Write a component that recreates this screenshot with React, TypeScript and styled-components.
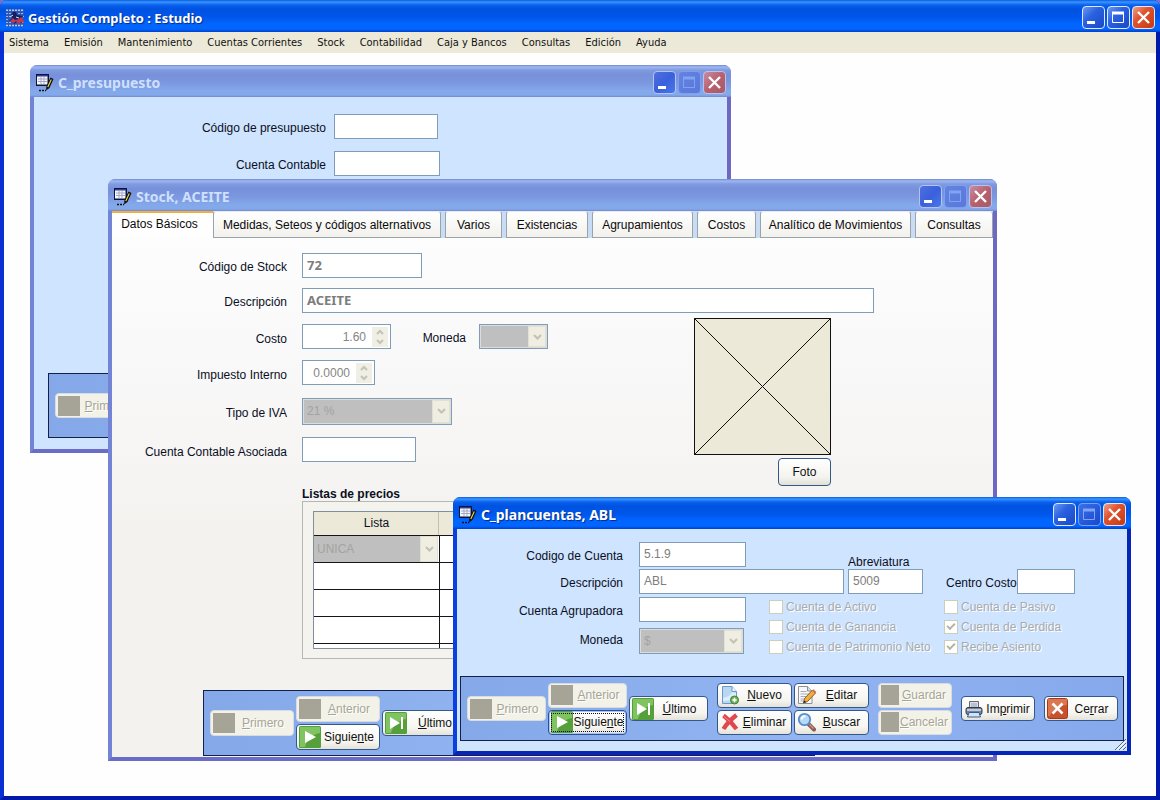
import React, { useId } from "react";
import styled, { createGlobalStyle, css } from "styled-components";

const ui = `"Liberation Sans", Arial, sans-serif`;
const menuFont = `"DejaVu Sans Condensed", Tahoma, sans-serif`;
const titleFont = `"Noto Sans", "Trebuchet MS", sans-serif`;

const GlobalStyle = createGlobalStyle`
  *, *::before, *::after { box-sizing: border-box; }
  body { margin: 0; background: #7b6fd0; font: 12px/16px ${ui}; color: #0a0f1e; }
  button, input, select { font: inherit; margin: 0; }
`;

/* ---------- window chrome ---------- */

type Tone = "active" | "inactive";

const App_ = styled.main`
  display: flex;
  flex-direction: column;
  min-height: 100vh;
  border: 4px solid #0a2fd2;
  border-top: 0;
  border-right-color: #0019a8;
  border-bottom-color: #0019a8;
  border-radius: 7px 7px 0 0;
  background: #fefefe;
`;

const Frame = styled.section<{ $tone: Tone; $x: number; $y: number; $w: number; $h: number }>`
  position: absolute;
  left: ${(p) => p.$x}px;
  top: ${(p) => p.$y}px;
  width: ${(p) => p.$w}px;
  min-height: ${(p) => p.$h}px;
  display: flex;
  flex-direction: column;
  border: 4px solid;
  border-top: 0;
  border-radius: 8px 8px 0 0;
  ${(p) =>
    p.$tone === "active"
      ? css`
          border-color: #0a3fe0 #0526b8 #0526b8 #0a3fe0;
        `
      : css`
          border-color: #7383d6 #6c68c4 #6a6cc6 #7383d6;
        `}
`;

const Bar = styled.header<{ $tone: Tone }>`
  display: flex;
  align-items: center;
  gap: 4px;
  height: 32px;
  margin: 0 -4px;
  padding: 3px 5px 0 6px;
  border-radius: 7px 7px 0 0;
  background: ${(p) =>
    p.$tone === "active"
      ? "linear-gradient(#0a5be0 0, #3a95ff 2px, #0a62ee 5px, #0052e0 9px, #0056ea 17px, #0066ff 24px, #0066ff 29px, #0040cc 32px)"
      : "linear-gradient(#7488cf 0, #9db8f2 2px, #819be0 5px, #7790da 10px, #7b98e0 18px, #84a9ea 26px, #84a9ea 30px, #7487d2 32px)"};
`;

const Title = styled.h1<{ $tone: Tone }>`
  flex: 1;
  margin: 0;
  font: 700 13px/20px ${titleFont};
  color: ${(p) => (p.$tone === "active" ? "#fff" : "#cfe0ff")};
  text-shadow: ${(p) => (p.$tone === "active" ? "1px 1px 1px #0a2a8c" : "none")};
`;

const ChildTitle = styled(Title)`
  font-size: 14px;
`;

const Controls = styled.div`
  display: flex;
  gap: 2px;
`;

const Control = styled.button<{ $tone: Tone; $kind: "min" | "max" | "close"; $off?: boolean }>`
  width: 23px;
  height: 23px;
  padding: 0;
  display: grid;
  place-items: center;
  border-radius: 4px;
  border: 1px solid ${(p) => (p.$tone === "active" && !p.$off ? "#dfeaff" : p.$off ? "#7d9ff0" : "#b3c4f3")};
  background: ${(p) => {
    if (p.$kind === "close")
      return p.$tone === "active"
        ? "linear-gradient(135deg, #f0a088, #e0522c 40%, #c43a14)"
        : "linear-gradient(135deg, #c88ca4, #b8606c 50%, #a85a68)";
    if (p.$off) return p.$tone === "active" ? "linear-gradient(135deg, #3a70ea, #1648cc)" : "linear-gradient(135deg, #6482e0, #5a78da)";
    return p.$tone === "active"
      ? "linear-gradient(135deg, #6c98f4, #2a62e0 40%, #1a48c4)"
      : "linear-gradient(135deg, #5070e0, #3a60dc 50%, #4878ea)";
  }};
  color: ${(p) => (p.$off ? "#7fa4f4" : "#fff")};
`;

function WindowControls({ tone, maxOff }: { tone: Tone; maxOff?: boolean }) {
  return (
    <Controls>
      <Control type="button" aria-label="Minimizar" $tone={tone} $kind="min">
        <svg width="21" height="21"><rect x="4" y="14" width="8" height="3" fill="currentColor" /></svg>
      </Control>
      <Control type="button" aria-label="Maximizar" $tone={tone} $kind="max" $off={maxOff}>
        <svg width="21" height="21">
          <path d="M4.500 5.500h11v10h-11z" fill="none" stroke="currentColor" />
          <path d="M4 4.500h12v3H4z" fill="currentColor" />
        </svg>
      </Control>
      <Control type="button" aria-label="Cerrar ventana" $tone={tone} $kind="close">
        <svg width="21" height="21"><path d="M5 5l11 11M16 5L5 16" stroke="currentColor" strokeWidth="2.400" /></svg>
      </Control>
    </Controls>
  );
}

const FormIcon = () => (
  <svg width="18" height="18" viewBox="0 0 18 18" aria-hidden="true">
    <rect x="0" y="0" width="13" height="12" fill="#0c1440" />
    <rect x="1" y="1" width="11" height="2" fill="#2c3a94" />
    <rect x="1" y="2.500" width="10.500" height="8" fill="#f6f8ff" />
    <path d="M2 5h9M2 7.500h9M5 3v7M8 3v7" stroke="#a4a8c0" fill="none" />
    <path d="M14.500 3.500l3 1.500-4 9-3.500 2.500.5-4.500z" fill="#111" />
    <path d="M14.800 5.200l1 .6-3.500 7.500-1-.5z" fill="#f0dc48" />
    <path d="M3 16.500h7" stroke="#111" strokeWidth="1.500" strokeDasharray="2 1" />
  </svg>
);

const AppIcon = () => (
  <svg width="18" height="18" viewBox="0 0 18 18" aria-hidden="true">
    <rect width="18" height="18" fill="#2c58b8" />
    <path d="M0 1.200h18M0 16.500h18" stroke="#b8c8f0" strokeWidth="1.600" strokeDasharray="2 1" />
    <path d="M0 4.500h6M0 7.500h4M0 10.500h3M0 13.500h6M12 4.500h6M14 7.500h4M13 13.500h5" stroke="#9cb0e4" strokeDasharray="2 1" />
    <path d="M7 3h3l1 3 6 1-3 3 2 4-5-1-3 2-1-3-4 0 3-3-1-3z" fill="#141e60" />
    <path d="M4 12l3-3 2 2 4-1 2-2 3 4v2l-3-1-3 2-2-3-2 2z" fill="#c43850" />
    <path d="M4 8l3-2M10 8l3 1" stroke="#e8ecfa" />
  </svg>
);

/* ---------- menu ---------- */

const Menu = styled.nav`
  display: flex;
  flex-wrap: wrap;
  gap: 15px;
  min-height: 21px;
  padding: 0 5px;
  background: #ece9d8;
`;

const MenuItem = styled.button`
  border: 0;
  padding: 0;
  background: none;
  color: #111;
  font: 11px/20px ${menuFont};
`;

const Desk = styled.div`
  flex: 1;
`;

/* ---------- form parts ---------- */

const line = "#7f9db9";

const Field = styled.input<{ $w?: number; $bold?: boolean }>`
  width: ${(p) => (p.$w ? `${p.$w}px` : "100%")};
  height: 25px;
  padding: 0 4px 2px;
  border: 1px solid ${line};
  background: #fff;
  color: #7d7d7d;
  ${(p) => p.$bold && `font: 700 13px/20px ${titleFont};`}
`;

const Label = styled.label<{ $pad?: number }>`
  text-align: right;
  padding: 6px ${(p) => p.$pad ?? 0}px 0 0;
  white-space: nowrap;
`;

const SpinBox = styled.span<{ $w: number }>`
  display: flex;
  width: ${(p) => p.$w}px;
  height: 25px;
  padding-right: 2px;
  align-items: center;
  border: 1px solid ${line};
  background: #fff;
`;

const SpinInput = styled.input`
  flex: 1;
  min-width: 0;
  border: 0;
  padding: 0 6px 0 0;
  background: none;
  text-align: right;
  color: #858585;
`;

const SpinArrows = styled.span`
  display: grid;
  width: 16px;
  height: 20px;
  place-items: center;
  background: #f0efe6;
`;

const ComboBox = styled.span<{ $w: number; $h: number; $flat?: boolean }>`
  display: flex;
  width: ${(p) => p.$w}px;
  height: ${(p) => p.$h}px;
  padding: ${(p) => (p.$flat ? 0 : 1)}px;
  border: ${(p) => (p.$flat ? 0 : 1)}px solid ${line};
  background: #dcdcd8;
`;

const ComboSelect = styled.select`
  flex: 1;
  min-width: 0;
  appearance: none;
  border: 0;
  border-radius: 0;
  padding: 0 3px;
  background: #bfbfbf;
  color: #a3a3a0;
  opacity: 1;
`;

const ComboArrow = styled.span`
  display: grid;
  width: 18px;
  place-items: center;
  background: #f0eee2;
  border: 1px solid #e2e0d2;
`;

function Combo({ w, h, value, id, flat, label }: { w: number; h: number; value: string; id?: string; flat?: boolean; label?: string }) {
  return (
    <ComboBox $w={w} $h={h} $flat={flat}>
      <ComboSelect id={id} disabled aria-label={label}>
        <option>{value}</option>
      </ComboSelect>
      <ComboArrow>
        <svg width="9" height="6"><path d="M1 1l3.500 3.500L8 1" fill="none" stroke="#c2c1b2" strokeWidth="2" /></svg>
      </ComboArrow>
    </ComboBox>
  );
}

function Spin({ w, value, id }: { w: number; value: string; id: string }) {
  return (
    <SpinBox $w={w}>
      <SpinInput id={id} defaultValue={value} />
      <SpinArrows>
        <svg width="8" height="16" fill="none" stroke="#c4c3b4" strokeWidth="2">
          <path d="M1 5l3-3 3 3M1 11l3 3 3-3" />
        </svg>
      </SpinArrows>
    </SpinBox>
  );
}

/* ---------- record toolbar ---------- */

const Toolbar = styled.footer`
  display: flex;
  align-items: center;
  gap: 9px;
  padding-left: 6px;
  border: 1px solid #14204a;
  background: linear-gradient(90deg, #84a8e8, #92b4f2 50%, #86a9ec);
`;

const Group = styled.div`
  display: flex;
  align-items: center;
  gap: 2px;
`;

const Stack = styled.div`
  display: grid;
  gap: 2px;
`;

const ToolButton = styled.button<{ $w: number; $h: number; $focus?: boolean }>`
  display: flex;
  align-items: center;
  width: ${(p) => p.$w}px;
  height: ${(p) => p.$h}px;
  padding: 0 2px;
  border: 1px solid #33588a;
  border-radius: 4px;
  background: linear-gradient(#ffffff, #f6f5f0 70%, #e4e2d8);
  color: #111;
  white-space: nowrap;
  &:disabled {
    border-color: #d8dce0;
    background: #f3f2e8;
    color: #a6a595;
    text-shadow: 1px 1px 0 #fff;
  }
  ${(p) =>
    p.$focus &&
    css`
      border-color: #2c4f9c;
      box-shadow: inset 0 0 0 1px #a9c4f4;
      outline: 1px dotted #111;
      outline-offset: -4px;
    `}
`;

const Caption = styled.span`
  flex: 1;
  text-align: center;
`;

const Blank = styled.i<{ $w: number }>`
  width: ${(p) => p.$w}px;
  height: 20px;
  background: #a5a497;
`;

const Green = ({ last }: { last?: boolean }) => (
  <svg width="22" height="22" viewBox="0 0 22 22" aria-hidden="true">
    <rect width="22" height="22" rx="1.500" fill="#56a03c" />
    <path d="M1 1h20v6C14 8 8 13 6 21H1z" fill="#80c462" />
    <path d={last ? "M5 5l10 6-10 6z" : "M6 5l11 6-11 6z"} fill="#fff" />
    {last && <path d="M17 5v12" stroke="#fff" strokeWidth="2" />}
  </svg>
);

const NewIcon = () => (
  <svg width="20" height="20" viewBox="0 0 20 20" aria-hidden="true">
    <path d="M2.500 1.500h9.500l4.500 5v12h-14z" fill="#b8d8f2" stroke="#6c9ac8" />
    <path d="M12 1.500v5h4.500" fill="#eef6fd" stroke="#6c9ac8" />
    <path d="M3 13c5-1 8-3 9-6l4 1v4c-3 3-8 4-13 4z" fill="#dcedfa" />
    <circle cx="14.500" cy="15" r="4" fill="#6cb058" stroke="#3e8434" />
    <path d="M14.500 12.800v4.400M12.300 15h4.400" stroke="#fff" strokeWidth="1.500" />
  </svg>
);
const DeleteIcon = () => (
  <svg width="20" height="20" viewBox="0 0 20 20" aria-hidden="true">
    <path d="M3.500 3.500c4 3 9 8 13 13.500M16.500 3C11.500 7 7 11 3.500 17" stroke="#e0484e" strokeWidth="4.400" fill="none" />
    <path d="M4 4.500l6 5" stroke="#f08a8e" />
  </svg>
);
const EditIcon = () => (
  <svg width="20" height="20" viewBox="0 0 20 20" aria-hidden="true">
    <path d="M1.500 1.500h9l4.500 4.500v12.500H1.500z" fill="#f8f8fa" stroke="#8a8f98" />
    <path d="M10.500 1.500V6H15" fill="#cfe0f0" stroke="#8a8f98" />
    <path d="M3.500 6.500h6M3.500 9h9M3.500 11.500h7M3.500 14h4M3.500 16h3" stroke="#a4acb8" />
    <path d="M15.500 5l3 3-8 8.500-4 1.500 1-4.500z" fill="#f0ae40" stroke="#8a5a20" />
    <path d="M15 5.500L18 8.500l1.300-1.500-2.800-2.800z" fill="#d86a50" />
    <path d="M6.500 18l.7-2.600 1.900 1.700z" fill="#222" />
  </svg>
);
const SearchIcon = () => (
  <svg width="20" height="20" viewBox="0 0 20 20" aria-hidden="true">
    <path d="M11.500 12l5.500 5.500" stroke="#8c5c50" strokeWidth="4" strokeLinecap="round" />
    <path d="M12.500 12.500l4 4" stroke="#c89a88" strokeWidth="1.200" />
    <circle cx="7.500" cy="7.500" r="5.700" fill="#b4daf8" stroke="#5a8cd0" strokeWidth="1.800" />
    <path d="M4.500 7.500c.3-2.200 1.800-3.500 4-3.200" stroke="#fff" strokeWidth="1.800" fill="none" />
  </svg>
);
const PrintIcon = () => (
  <svg width="20" height="20" viewBox="0 0 20 20" aria-hidden="true">
    <path d="M5.500 9V2.500h9V9" fill="#dce0e8" stroke="#626a78" />
    <path d="M7 5h6M7 7h6" stroke="#9aa2b0" />
    <rect x="2" y="8.500" width="16" height="7" rx="2" fill="#76849a" stroke="#303a4c" />
    <path d="M3 11h14" stroke="#dbe3ee" strokeWidth="1.500" />
    <path d="M5 13.500h10l1.500 4.500h-13z" fill="#cfe4fa" stroke="#3c5c8c" />
  </svg>
);
const CloseIcon = () => (
  <svg width="21" height="21" viewBox="0 0 21 21" aria-hidden="true">
    <rect x="0.500" y="0.500" width="20" height="20" rx="2" fill="#c8502c" stroke="#a03c1c" />
    <path d="M1 1h19v6C12 8 5 11 3 18H1z" fill="#dc7650" />
    <path d="M5.500 5.500l10 10M15.500 5.500l-10 10" stroke="#fff" strokeWidth="2.600" />
  </svg>
);

function NavButtons({ w, h, focus }: { w: number; h: number; focus?: boolean }) {
  return (
    <Group>
      <ToolButton type="button" disabled $w={w} $h={h}><Blank $w={22} /><Caption><u>P</u>rimero</Caption></ToolButton>
      <Stack>
        <ToolButton type="button" disabled $w={w} $h={h}><Blank $w={22} /><Caption><u>A</u>nterior</Caption></ToolButton>
        <ToolButton type="button" $w={w} $h={h} $focus={focus}><Green /><Caption>Siguie<u>n</u>te</Caption></ToolButton>
      </Stack>
      <ToolButton type="button" $w={w} $h={h}><Green last /><Caption><u>Ú</u>ltimo</Caption></ToolButton>
    </Group>
  );
}

/* ---------- C_presupuesto ---------- */

const BlueBody = styled.form`
  flex: 1;
  display: flex;
  flex-direction: column;
  justify-content: space-between;
  background: #cfe4ff;
`;

const BudgetGrid = styled.div`
  display: grid;
  grid-template-columns: 292px auto;
  gap: 12px 8px;
  padding-top: 17px;
`;

const BudgetTools = styled(Toolbar)`
  height: 65px;
  margin: 0 14px 11px;
`;

function BudgetWindow() {
  const id = useId();
  return (
    <Frame $tone="inactive" $x={30} $y={65} $w={701} $h={388}>
      <Bar $tone="inactive">
        <FormIcon />
        <ChildTitle as="h2" $tone="inactive">C_presupuesto</ChildTitle>
        <WindowControls tone="inactive" maxOff />
      </Bar>
      <BlueBody>
        <BudgetGrid>
          <Label htmlFor={id + "c"}>Código de presupuesto</Label>
          <Field id={id + "c"} $w={104} />
          <Label htmlFor={id + "n"}>Cuenta Contable</Label>
          <Field id={id + "n"} $w={106} />
        </BudgetGrid>
        <BudgetTools>
          <ToolButton type="button" disabled $w={79} $h={25}><Blank $w={22} /><Caption><u>P</u>rimero</Caption></ToolButton>
        </BudgetTools>
      </BlueBody>
    </Frame>
  );
}

/* ---------- Stock ---------- */

const StockBody = styled.form`
  flex: 1;
  display: flex;
  flex-direction: column;
  background: linear-gradient(#fefefe, #f9f8f8 30%, #f3f2ef 60%, #f3f2ee);
`;

const Tabs = styled.div`
  display: flex;
  gap: 4px;
  height: 27px;
  background: #c9dcf6;
`;

const Tab = styled.button<{ $w: number; $on?: boolean }>`
  flex: 0 1 ${(p) => p.$w}px;
  padding: 0;
  white-space: nowrap;
  color: #0a0a0a;
  ${(p) =>
    p.$on
      ? css`
          margin-right: -4px;
          padding: 0 6px 4px 0;
          border: 0;
          border-top: 2px solid #f0b040;
          background: #fefefe;
        `
      : css`
          border: 1px solid #9aa2aa;
          border-top-color: #e8ecf0;
          border-radius: 3px 3px 0 0;
          background: linear-gradient(#fff, #f2f1ec);
        `}
`;

const StockTop = styled.div`
  display: grid;
  grid-template-columns: 175px auto;
  gap: 10px 15px;
  padding: 15px 119px 0 0;
`;

const StockMid = styled.div`
  display: flex;
  justify-content: space-between;
  padding: 5px 162px 0 0;
`;

const StockGrid = styled.div`
  display: grid;
  grid-template-columns: 175px auto;
  grid-template-rows: 25px 25px 30px 25px;
  align-items: center;
  gap: 11px 15px;
  padding-top: 6px;
`;

const MidLabel = styled(Label)`
  padding-top: 4px;
`;

const Inline = styled.div`
  display: flex;
`;

const Gapped = styled(Label)`
  width: 75px;
`;

const ComboSlot = styled.span`
  margin-left: 13px;
`;

const PhotoBox = styled.div`
  display: flex;
  flex-direction: column;
  align-items: flex-end;
  gap: 3px;
`;

const PushButton = styled.button`
  width: 53px;
  height: 28px;
  padding: 0;
  border: 1px solid #33588a;
  border-radius: 4px;
  background: linear-gradient(#fff, #f4f3ee 70%, #e2e0d6);
  color: #111;
`;

const PriceSet = styled.div`
  margin: 1px 15px 0 190px;
`;

const PriceTitle = styled.h3`
  margin: 0;
  font: 700 12px/14px ${ui};
`;

const PriceFrame = styled.div`
  padding: 9px 10px;
  border: 1px solid #b4b8b4;
  background: #f4f3ee;
`;

const PriceClip = styled.div`
  height: 138px;
  overflow: hidden;
  border: 1px solid #7f8f9f;
  background: #fff;
`;

const PriceTable = styled.table`
  width: 100%;
  table-layout: fixed;
  border-collapse: collapse;
  th {
    height: 23px;
    padding: 0;
    font-weight: 400;
    background: #ece9d8;
    border-bottom: 1px solid #14161c;
    box-shadow: inset -1px 0 0 #c4c1b0;
  }
  th:first-child { width: 125px; }
  td {
    height: 27px;
    padding: 0;
    border-bottom: 1px solid #14161c;
    border-right: 1px solid #14161c;
  }
`;

const StockTools = styled(Toolbar)`
  width: 612px;
  height: 66px;
  margin: auto 0 1px 91px;
`;

const tabs: [string, number][] = [
  ["Datos Básicos", 101],
  ["Medidas, Seteos y códigos alternativos", 228],
  ["Varios", 57],
  ["Existencias", 82],
  ["Agrupamientos", 101],
  ["Costos", 59],
  ["Analítico de Movimientos", 151],
  ["Consultas", 78],
];

function StockWindow() {
  const id = useId();
  return (
    <Frame $tone="inactive" $x={108} $y={179} $w={889} $h={582}>
      <Bar $tone="inactive">
        <FormIcon />
        <ChildTitle as="h2" $tone="inactive">Stock, ACEITE</ChildTitle>
        <WindowControls tone="inactive" maxOff />
      </Bar>
      <StockBody>
        <Tabs role="tablist">
          {tabs.map(([name, w], i) => (
            <Tab key={name} type="button" role="tab" aria-selected={i === 0} $w={w} $on={i === 0}>{name}</Tab>
          ))}
        </Tabs>
        <StockTop>
          <Label htmlFor={id + "s"}>Código de Stock</Label>
          <Field id={id + "s"} $w={120} $bold defaultValue="72" />
          <Label htmlFor={id + "d"}>Descripción</Label>
          <Field id={id + "d"} $bold defaultValue="ACEITE" />
        </StockTop>
        <StockMid>
          <StockGrid>
            <MidLabel htmlFor={id + "c"}>Costo</MidLabel>
            <Inline>
              <Spin id={id + "c"} w={89} value="1.60" />
              <Gapped htmlFor={id + "m"}>Moneda</Gapped>
              <ComboSlot><Combo id={id + "m"} w={69} h={25} value="" /></ComboSlot>
            </Inline>
            <MidLabel htmlFor={id + "i"}>Impuesto Interno</MidLabel>
            <Spin id={id + "i"} w={73} value="0.0000" />
            <MidLabel htmlFor={id + "t"}>Tipo de IVA</MidLabel>
            <Combo id={id + "t"} w={150} h={27} value="21 %" />
            <MidLabel htmlFor={id + "a"}>Cuenta Contable Asociada</MidLabel>
            <Field id={id + "a"} $w={114} />
          </StockGrid>
          <PhotoBox>
            <svg width="137" height="137" role="img" aria-label="Foto">
              <rect x="0.500" y="0.500" width="136" height="136" fill="#ece9d8" stroke="#111" />
              <path d="M0 0l137 137M137 0L0 137" stroke="#111" />
            </svg>
            <PushButton type="button">Foto</PushButton>
          </PhotoBox>
        </StockMid>
        <PriceSet>
          <PriceTitle>Listas de precios</PriceTitle>
          <PriceFrame>
            <PriceClip>
              <PriceTable>
                <thead>
                  <tr><th>Lista</th><th /></tr>
                </thead>
                <tbody>
                  <tr>
                    <td><Combo w={124} h={26} value="UNICA" flat label="Lista" /></td>
                    <td />
                  </tr>
                  {[1, 2, 3, 4].map((n) => (
                    <tr key={n}><td /><td /></tr>
                  ))}
                </tbody>
              </PriceTable>
            </PriceClip>
          </PriceFrame>
        </PriceSet>
        <StockTools>
          <NavButtons w={84} h={26} />
        </StockTools>
      </StockBody>
    </Frame>
  );
}

/* ---------- C_plancuentas ---------- */

const AccountTop = styled.div`
  display: grid;
  grid-template-columns: 178px 205px 75px auto;
  grid-template-rows: 25px 25px;
  gap: 2px 4px;
  padding-top: 13px;
`;

const Above = styled.label`
  align-self: end;
  margin-bottom: -3px;
`;

const Centro = styled.div`
  display: flex;
  padding-left: 19px;
`;

const AccountLow = styled.div`
  display: flex;
  gap: 23px;
  margin-top: 3px;
`;

const AccountGrid = styled.div`
  display: grid;
  grid-template-columns: 178px 107px;
  gap: 2px 4px;
`;

const Checks = styled.div`
  display: grid;
  grid-template-columns: 175px auto;
  grid-auto-rows: 20px;
`;

const CheckLabel = styled.label`
  display: flex;
  align-items: center;
  gap: 3px;
  color: #a9abab;
  text-shadow: 1px 1px 0 #fff;
  white-space: nowrap;
`;

const Check = styled.input`
  appearance: none;
  width: 14px;
  height: 14px;
  border: 1px solid #cdcdbb;
  background: #fff;
  &:checked::after {
    content: "";
    display: block;
    width: 8px;
    height: 5px;
    margin: 2px 0 0 2px;
    border: solid #b4b4a4;
    border-width: 0 0 2px 2px;
    transform: rotate(-45deg);
  }
`;

const AccountTools = styled(Toolbar)`
  height: 65px;
  margin: 0 3px 10px;
`;

const Grip = styled.svg`
  position: absolute;
  right: 0;
  bottom: 0;
`;

const checks: [string, boolean][] = [
  ["Cuenta de Activo", false],
  ["Cuenta de Pasivo", false],
  ["Cuenta de Ganancia", false],
  ["Cuenta de Perdida", true],
  ["Cuenta de Patrimonio Neto", false],
  ["Recibe Asiento", true],
];

function AccountWindow() {
  const id = useId();
  return (
    <Frame $tone="active" $x={453} $y={497} $w={678} $h={258}>
      <Bar $tone="active">
        <FormIcon />
        <ChildTitle as="h2" $tone="active">C_plancuentas, ABL</ChildTitle>
        <WindowControls tone="active" maxOff />
      </Bar>
      <BlueBody>
        <div>
          <AccountTop>
            <Label htmlFor={id + "c"} $pad={12}>Codigo de Cuenta</Label>
            <Field id={id + "c"} $w={107} defaultValue="5.1.9" />
            <Above htmlFor={id + "a"}>Abreviatura</Above>
            <span />
            <Label htmlFor={id + "d"} $pad={12}>Descripción</Label>
            <Field id={id + "d"} defaultValue="ABL" />
            <Field id={id + "a"} defaultValue="5009" />
            <Centro>
              <Label htmlFor={id + "o"}>Centro Costo</Label>
              <Field id={id + "o"} $w={58} />
            </Centro>
          </AccountTop>
          <AccountLow>
            <AccountGrid>
              <Label htmlFor={id + "g"} $pad={12}>Cuenta Agrupadora</Label>
              <Field id={id + "g"} />
              <MidLabel htmlFor={id + "m"} $pad={12}>Moneda</MidLabel>
              <Combo id={id + "m"} w={105} h={26} value="$" />
            </AccountGrid>
            <Checks>
              {checks.map(([name, on]) => (
                <CheckLabel key={name}>
                  <Check type="checkbox" defaultChecked={on} disabled />
                  {name}
                </CheckLabel>
              ))}
            </Checks>
          </AccountLow>
        </div>
        <AccountTools>
          <NavButtons w={79} h={25} focus />
          <Group>
            <Stack>
              <ToolButton type="button" $w={75} $h={25}><NewIcon /><Caption><u>N</u>uevo</Caption></ToolButton>
              <ToolButton type="button" $w={75} $h={25}><DeleteIcon /><Caption><u>E</u>liminar</Caption></ToolButton>
            </Stack>
            <Stack>
              <ToolButton type="button" $w={75} $h={25}><EditIcon /><Caption><u>E</u>ditar</Caption></ToolButton>
              <ToolButton type="button" $w={75} $h={25}><SearchIcon /><Caption><u>B</u>uscar</Caption></ToolButton>
            </Stack>
          </Group>
          <Stack>
            <ToolButton type="button" disabled $w={74} $h={25}><Blank $w={18} /><Caption><u>G</u>uardar</Caption></ToolButton>
            <ToolButton type="button" disabled $w={74} $h={25}><Blank $w={18} /><Caption><u>C</u>ancelar</Caption></ToolButton>
          </Stack>
          <ToolButton type="button" $w={74} $h={25}><PrintIcon /><Caption>Im<u>p</u>rimir</Caption></ToolButton>
          <ToolButton type="button" $w={74} $h={25}><CloseIcon /><Caption>Ce<u>r</u>rar</Caption></ToolButton>
        </AccountTools>
      </BlueBody>
      <Grip width="13" height="13" aria-hidden="true">
        <path d="M1 12L12 1M5 12l7-7M9 12l3-3" stroke="#5c6878" />
        <path d="M2.500 12L12 2.500M6.500 12L12 6.500" stroke="#fff" />
      </Grip>
    </Frame>
  );
}

const menu = ["Sistema", "Emisión", "Mantenimiento", "Cuentas Corrientes", "Stock", "Contabilidad", "Caja y Bancos", "Consultas", "Edición", "Ayuda"];

export default function App() {
  return (
    <>
      <GlobalStyle />
      <App_>
        <Bar $tone="active">
          <AppIcon />
          <Title $tone="active">Gestión Completo : Estudio</Title>
          <WindowControls tone="active" />
        </Bar>
        <Menu>
          {menu.map((m) => (
            <MenuItem key={m} type="button">{m}</MenuItem>
          ))}
        </Menu>
        <Desk>
          <BudgetWindow />
          <StockWindow />
          <AccountWindow />
        </Desk>
      </App_>
    </>
  );
}
